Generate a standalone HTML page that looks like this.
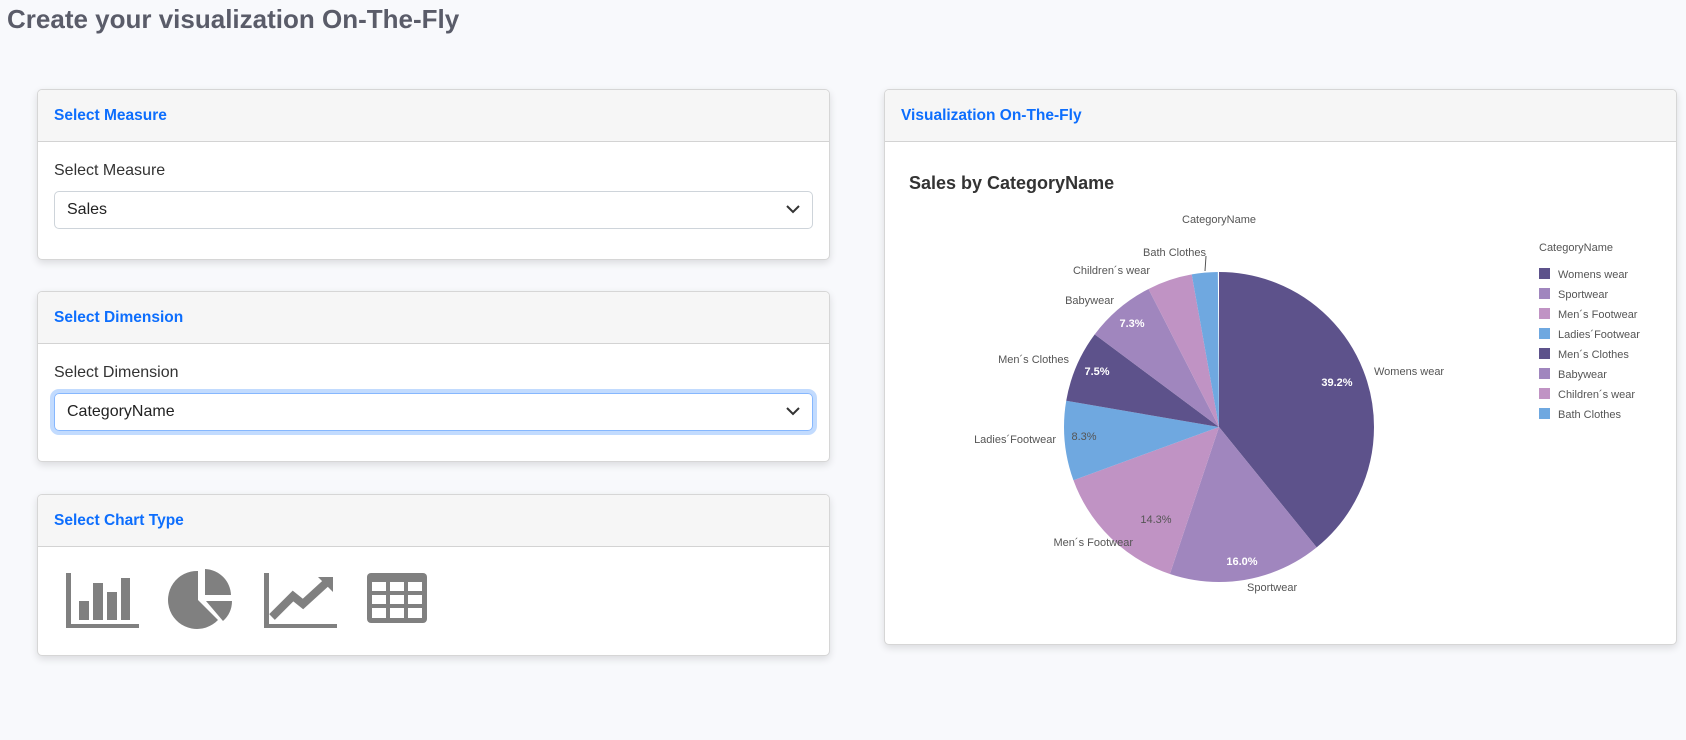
<!DOCTYPE html>
<html><head><meta charset="utf-8"><style>
*{box-sizing:border-box;margin:0;padding:0}
body{width:1686px;height:740px;background:#f8f9fc;font-family:"Liberation Sans",sans-serif;position:relative;overflow:hidden;color:#212529}
h1{position:absolute;left:7px;top:4px;font-size:26px;font-weight:bold;color:#5a5c69;letter-spacing:0}
.card{position:absolute;background:#fff;border:1px solid #d6d6d6;border-radius:5px;box-shadow:0 3px 8px rgba(0,0,0,.12);overflow:hidden}
.hd{height:52px;background:#f6f6f6;border-bottom:1px solid #d3d3d3;padding-left:16px;line-height:51px;color:#0d6efd;font-weight:bold;font-size:15.5px}
.lbl{position:absolute;left:16px;font-size:16px;color:#333}
.sel{position:absolute;left:16px;right:16px;height:38px;border:1px solid #ced4da;border-radius:5px;padding-left:12px;line-height:36px;font-size:16px;color:#222}
.sel svg{position:absolute;right:12px;top:12px}
.foc{border-color:#86b7fe;box-shadow:0 0 0 4px rgba(13,110,253,.25)}
</style></head><body>
<h1>Create your visualization On-The-Fly</h1>

<div class="card" style="left:37px;top:89px;width:793px;height:171px">
<div class="hd">Select Measure</div>
<div class="lbl" style="top:72px">Select Measure</div>
<div class="sel" style="top:101px">Sales<svg width="14" height="10" viewBox="0 0 14 10"><path d="M1 2l6 6 6-6" fill="none" stroke="#333" stroke-width="2"/></svg></div>
</div>

<div class="card" style="left:37px;top:291px;width:793px;height:171px">
<div class="hd">Select Dimension</div>
<div class="lbl" style="top:72px">Select Dimension</div>
<div class="sel foc" style="top:101px">CategoryName<svg width="14" height="10" viewBox="0 0 14 10"><path d="M1 2l6 6 6-6" fill="none" stroke="#333" stroke-width="2"/></svg></div>
</div>

<div class="card" style="left:37px;top:494px;width:793px;height:162px">
<div class="hd">Select Chart Type</div>
</div>

<div class="card" style="left:884px;top:89px;width:793px;height:556px">
<div class="hd">Visualization On-The-Fly</div>
</div>

<svg style="position:absolute;left:0;top:0" width="1686" height="740">
<g fill="#808080">
<rect x="66" y="573" width="5" height="55"/><rect x="66" y="624" width="73" height="4"/>
<rect x="79" y="601" width="10" height="19"/><rect x="93" y="583" width="10" height="37"/><rect x="107" y="592" width="10" height="28"/><rect x="121" y="578" width="9" height="42"/>
<path d="M198 571 A29 29 0 1 0 218 620 L198 600 Z"/>
<path d="M205 569 A27 27 0 0 1 231 595 L205 595 Z"/>
<path d="M232 601 A27 27 0 0 1 223 621 L206 601 Z"/>
<rect x="264" y="573" width="5" height="55"/><rect x="264" y="624" width="73" height="4"/>
<path d="M367 577a4 4 0 0 1 4-4h52a4 4 0 0 1 4 4v42a4 4 0 0 1-4 4h-52a4 4 0 0 1-4-4z"/>
</g>
<path d="M272 617 L293 596 L303 604 L326 583" fill="none" stroke="#808080" stroke-width="8"/>
<path d="M318 577 L333 577 L333 592 Z" fill="#808080"/>
<g fill="#fff">
<rect x="372" y="582" width="14" height="9"/><rect x="390" y="582" width="14" height="9"/><rect x="408" y="582" width="14" height="9"/>
<rect x="372" y="595" width="14" height="9"/><rect x="390" y="595" width="14" height="9"/><rect x="408" y="595" width="14" height="9"/>
<rect x="372" y="608" width="14" height="10"/><rect x="390" y="608" width="14" height="10"/><rect x="408" y="608" width="14" height="10"/>
</g>

<text x="909" y="189" font-family="Liberation Sans" font-size="18" font-weight="bold" fill="#333">Sales by CategoryName</text>
<g transform="translate(1219,427) rotate(-90)" fill="none" stroke-width="155">
<circle r="77.5" pathLength="100" stroke="#5d528b" stroke-dasharray="39.2 100" stroke-dashoffset="0"/>
<circle r="77.5" pathLength="100" stroke="#a086be" stroke-dasharray="16.0 100" stroke-dashoffset="-39.2"/>
<circle r="77.5" pathLength="100" stroke="#c093c4" stroke-dasharray="14.3 100" stroke-dashoffset="-55.2"/>
<circle r="77.5" pathLength="100" stroke="#6fa8e0" stroke-dasharray="8.3 100" stroke-dashoffset="-69.5"/>
<circle r="77.5" pathLength="100" stroke="#5d528b" stroke-dasharray="7.5 100" stroke-dashoffset="-77.8"/>
<circle r="77.5" pathLength="100" stroke="#a086be" stroke-dasharray="7.3 100" stroke-dashoffset="-85.3"/>
<circle r="77.5" pathLength="100" stroke="#c093c4" stroke-dasharray="4.7 100" stroke-dashoffset="-92.6"/>
<circle r="77.5" pathLength="100" stroke="#6fa8e0" stroke-dasharray="2.7 100" stroke-dashoffset="-97.3"/>
</g>
<line x1="1206" y1="256" x2="1205" y2="271" stroke="#555" stroke-width="1"/>
<g font-family="Liberation Sans" font-size="11" fill="#555">
<text x="1219" y="223" text-anchor="middle">CategoryName</text>
<text x="1206" y="256" text-anchor="end">Bath Clothes</text>
<text x="1150" y="274" text-anchor="end">Children´s wear</text>
<text x="1114" y="304" text-anchor="end">Babywear</text>
<text x="1069" y="363" text-anchor="end">Men´s Clothes</text>
<text x="1056" y="443" text-anchor="end">Ladies´Footwear</text>
<text x="1133" y="546" text-anchor="end">Men´s Footwear</text>
<text x="1247" y="591">Sportwear</text>
<text x="1374" y="375">Womens wear</text>
<text x="1156" y="523" text-anchor="middle">14.3%</text>
<text x="1084" y="440" text-anchor="middle">8.3%</text>
</g>
<g font-family="Liberation Sans" font-size="11" font-weight="bold" fill="#fff" text-anchor="middle">
<text x="1337" y="386">39.2%</text>
<text x="1242" y="565">16.0%</text>
<text x="1097" y="375">7.5%</text>
<text x="1132" y="327">7.3%</text>
</g>
<g font-family="Liberation Sans" font-size="11" fill="#555">
<text x="1539" y="251">CategoryName</text>
<rect x="1539" y="268" width="11" height="11" fill="#5d528b"/><text x="1558" y="278">Womens wear</text>
<rect x="1539" y="288" width="11" height="11" fill="#a086be"/><text x="1558" y="298">Sportwear</text>
<rect x="1539" y="308" width="11" height="11" fill="#c093c4"/><text x="1558" y="318">Men´s Footwear</text>
<rect x="1539" y="328" width="11" height="11" fill="#6fa8e0"/><text x="1558" y="338">Ladies´Footwear</text>
<rect x="1539" y="348" width="11" height="11" fill="#5d528b"/><text x="1558" y="358">Men´s Clothes</text>
<rect x="1539" y="368" width="11" height="11" fill="#a086be"/><text x="1558" y="378">Babywear</text>
<rect x="1539" y="388" width="11" height="11" fill="#c093c4"/><text x="1558" y="398">Children´s wear</text>
<rect x="1539" y="408" width="11" height="11" fill="#6fa8e0"/><text x="1558" y="418">Bath Clothes</text>
</g>
</svg>
</body></html>
